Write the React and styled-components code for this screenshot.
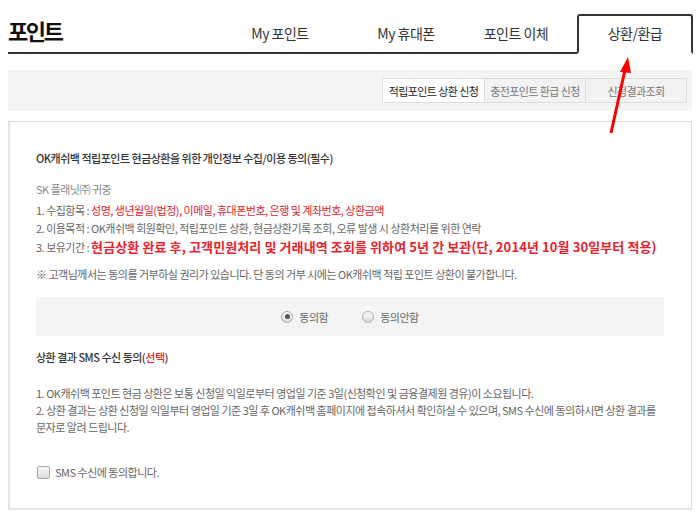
import React from "react";
import styled, { createGlobalStyle } from "styled-components";

const Global = createGlobalStyle`
  body {
    margin: 0;
    background: #fff;
    font-family: "Noto Sans CJK KR", "Noto Sans", sans-serif;
  }
  * { box-sizing: border-box; }
`;

const Page = styled.div`
  position: relative;
  width: 700px;
  padding: 0 8px;
`;

const Header = styled.div`
  display: flex;
  align-items: flex-end;
  height: 54px;
  border-bottom: 2px solid #333;
`;

const Title = styled.h1`
  margin: 0;
  align-self: flex-start;
  padding-top: 15px;
  font-size: 22px;
  font-weight: 700;
  letter-spacing: -2.4px;
  color: #111;
  line-height: 30px;
`;

const Tabs = styled.div`
  display: flex;
  align-items: flex-end;
  margin-left: auto;
  margin-bottom: -2px;
`;

const Tab = styled.div`
  display: flex;
  align-items: center;
  justify-content: center;
  width: ${(p) => p.$w || 116}px;
  height: 40px;
  padding-bottom: 3px;
  font-size: 14px;
  letter-spacing: -0.5px;
  color: #333;
  background: ${(p) => (p.$active ? "#fff" : "transparent")};
  border: 2px solid ${(p) => (p.$active ? "#333" : "transparent")};
  border-bottom: 2px solid ${(p) => (p.$active ? "#fff" : "transparent")};
  border-radius: 3px 3px 0 0;
  margin-right: ${(p) => (p.$active ? "-1px" : "0")};
`;

const SubBar = styled.div`
  display: flex;
  justify-content: flex-end;
  align-items: center;
  height: 41px;
  margin-top: 16px;
  padding-right: 5px;
  background: #f4f4f4;
`;

const SubTabs = styled.div`
  display: flex;
  border: 1px solid #ddd;
`;

const SubTab = styled.div`
  width: 101px;
  height: 23px;
  display: flex;
  align-items: center;
  justify-content: center;
  font-size: 11px;
  letter-spacing: -0.6px;
  color: ${(p) => (p.$active ? "#222" : "#777")};
  background: ${(p) => (p.$active ? "#fff" : "#f2f2f2")};
  & + & {
    border-left: 1px solid #ddd;
  }
`;

const Box = styled.div`
  margin-top: 10px;
  border: 1px solid #ddd;
  border-left: 2px solid #e4e4e4;
  border-bottom: 2px solid #e4e4e4;
  padding: 27px 27px 28px 26px;
  font-size: 11px;
  letter-spacing: -0.5px;
  color: #666;
`;

const Heading = styled.div`
  font-size: 11px;
  line-height: 18px;
  color: #333;
  font-weight: 500;
  margin-top: ${(p) => p.$mt || 0}px;
  margin-bottom: ${(p) => p.$mb || 0}px;
`;

const Red = styled.span`
  color: #e8232b;
`;

const Line = styled.div`
  line-height: ${(p) => p.$lh || 18}px;
  color: ${(p) => p.$color || "#666"};
  margin-top: ${(p) => p.$mt || 0}px;
`;

const Strong = styled.span`
  color: #e8232b;
  font-weight: 700;
  font-size: 13px;
  letter-spacing: 0.1px;
`;

const ChoiceBar = styled.div`
  display: flex;
  justify-content: center;
  align-items: center;
  gap: 34px;
  height: 39px;
  margin-top: 14px;
  background: #f4f4f4;
`;

const Choice = styled.label`
  display: flex;
  align-items: center;
  gap: ${(p) => p.$gap || 6}px;
  margin-top: ${(p) => p.$mt || 0}px;
  padding-left: ${(p) => p.$pl || 0}px;
  color: #666;
`;

const Radio = styled.span`
  width: 12px;
  height: 12px;
  border-radius: 50%;
  border: 1px solid #aaa;
  background: linear-gradient(#fafafa, #dcdcdc);
  display: flex;
  align-items: center;
  justify-content: center;
  &::after {
    content: "";
    width: 5px;
    height: 5px;
    border-radius: 50%;
    background: ${(p) => (p.$checked ? "#555" : "transparent")};
  }
`;

const Check = styled.span`
  width: 13px;
  height: 13px;
  border: 1px solid #aaa;
  border-radius: 2px;
  background: linear-gradient(#fafafa, #dcdcdc);
`;

const Arrow = styled.svg`
  position: absolute;
  left: 600px;
  top: 52px;
`;

export default function App() {
  return (
    <Page>
      <Global />
      <Header>
        <Title>포인트</Title>
        <Tabs>
          <Tab $w={154}>My 포인트</Tab>
          <Tab $w={98}>My 휴대폰</Tab>
          <Tab $w={122}>포인트 이체</Tab>
          <Tab $active>상환/환급</Tab>
        </Tabs>
      </Header>

      <SubBar>
        <SubTabs>
          <SubTab $active>적립포인트 상환 신청</SubTab>
          <SubTab>충전포인트 환급 신청</SubTab>
          <SubTab>신청결과조회</SubTab>
        </SubTabs>
      </SubBar>

      <Box>
        <Heading $mb={13}>
          OK캐쉬백 적립포인트 현금상환을 위한 개인정보 수집/이용 동의(필수)
        </Heading>
        <Line $color="#888">SK 플래닛㈜ 귀중</Line>
        <Line $mt={3}>
          1. 수집항목 :{" "}
          <Red>성명, 생년월일(법정), 이메일, 휴대폰번호, 은행 및 계좌번호, 상환금액</Red>
        </Line>
        <Line $lh={19}>
          2. 이용목적 : OK캐쉬백 회원확인, 적립포인트 상환, 현금상환기록 조회, 오류 발생 시
          상환처리를 위한 연락
        </Line>
        <Line $lh={18}>
          3. 보유기간 :{" "}
          <Strong>
            현금상환 완료 후, 고객민원처리 및 거래내역 조회를 위하여 5년 간 보관(단, 2014년
            10월 30일부터 적용)
          </Strong>
        </Line>
        <Line $mt={9}>
          ※ 고객님께서는 동의를 거부하실 권리가 있습니다. 단 동의 거부 시에는 OK캐쉬백 적립
          포인트 상환이 불가합니다.
        </Line>

        <ChoiceBar>
          <Choice>
            <Radio $checked />
            동의함
          </Choice>
          <Choice>
            <Radio />
            동의안함
          </Choice>
        </ChoiceBar>

        <Heading $mt={12}>
          상환 결과 SMS 수신 동의(<Red>선택</Red>)
        </Heading>

        <Line $lh={17} $mt={19}>
          1. OK캐쉬백 포인트 현금 상환은 보통 신청일 익일로부터 영업일 기준 3일(신청확인 및
          금융결제원 경유)이 소요됩니다.
        </Line>
        <Line $lh={17}>
          2. 상환 결과는 상환 신청일 익일부터 영업일 기준 3일 후 OK캐쉬백 홈페이지에 접속하셔서
          확인하실 수 있으며, SMS 수신에 동의하시면 상환 결과를 문자로 알려 드립니다.
        </Line>

        <Choice $mt={28} $gap={5} $pl={1}>
          <Check />
          SMS 수신에 동의합니다.
        </Choice>
      </Box>

      <Arrow width="40" height="90" viewBox="0 0 40 90">
        <line x1="11" y1="81" x2="25" y2="18" stroke="#f00" strokeWidth="3" />
        <polygon points="28,5 20,20 31,21" fill="#f00" />
      </Arrow>
    </Page>
  );
}
